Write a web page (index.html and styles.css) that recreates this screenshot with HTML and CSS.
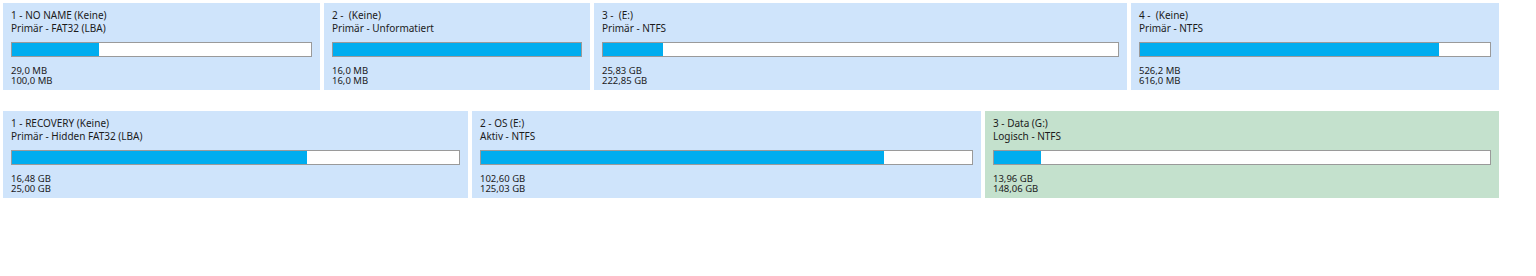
FILE: index.html
```html
<!DOCTYPE html>
<html>
<head>
    <title>Datenträger</title>
    <link rel="stylesheet" href="styles.css">
</head>
<body>

<div class="disk disk1">
    <div class="part">
        <div class="name">1 - NO NAME (Keine)</div>
        <div class="type">Primär - FAT32 (LBA)</div>
        <div class="bar"><div class="fill" style="width: 29%"></div></div>
        <div class="size">29,0 MB<br>100,0 MB</div>
    </div>
    <div class="part">
        <div class="name">2 - &nbsp;(Keine)</div>
        <div class="type">Primär - Unformatiert</div>
        <div class="bar"><div class="fill" style="width: 100%"></div></div>
        <div class="size">16,0 MB<br>16,0 MB</div>
    </div>
    <div class="part">
        <div class="name">3 - &nbsp;(E:)</div>
        <div class="type">Primär - NTFS</div>
        <div class="bar"><div class="fill" style="width: 11.6%"></div></div>
        <div class="size">25,83 GB<br>222,85 GB</div>
    </div>
    <div class="part">
        <div class="name">4 - &nbsp;(Keine)</div>
        <div class="type">Primär - NTFS</div>
        <div class="bar"><div class="fill" style="width: 85.4%"></div></div>
        <div class="size">526,2 MB<br>616,0 MB</div>
    </div>
</div>

<div class="disk disk2">
    <div class="part">
        <div class="name">1 - RECOVERY (Keine)</div>
        <div class="type">Primär - Hidden FAT32 (LBA)</div>
        <div class="bar"><div class="fill" style="width: 65.9%"></div></div>
        <div class="size">16,48 GB<br>25,00 GB</div>
    </div>
    <div class="part">
        <div class="name">2 - OS (E:)</div>
        <div class="type">Aktiv - NTFS</div>
        <div class="bar"><div class="fill" style="width: 82%"></div></div>
        <div class="size">102,60 GB<br>125,03 GB</div>
    </div>
    <div class="part logical">
        <div class="name">3 - Data (G:)</div>
        <div class="type">Logisch - NTFS</div>
        <div class="bar"><div class="fill" style="width: 9.4%"></div></div>
        <div class="size">13,96 GB<br>148,06 GB</div>
    </div>
</div>

</body>
</html>
```

FILE: styles.css
```css
body {
    margin: 3px;
    background: #fff;
    font-family: "Noto Sans", "Open Sans", sans-serif;
    color: #1b1b1b;
}

.disk {
    display: grid;
    column-gap: 4px;
    width: 1496px;
}

.disk1 {
    grid-template-columns: 317px 266px 533px 368px;
    margin-bottom: 21px;
}

.disk2 {
    grid-template-columns: 465px 509px 514px;
}

.part {
    background: #cfe4fb;
    padding: 6px 8px 4px 8px;
    height: 77px;
}

.part.logical {
    background: #c4e1cd;
}

.name, .type {
    font-size: 10px;
    line-height: 13px;
    white-space: nowrap;
}

.bar {
    margin-top: 7px;
    height: 13px;
    border: 1px solid #9a9a9a;
    background: #fff;
}

.fill {
    height: 100%;
    background: #00adef;
}

.size {
    margin-top: 9px;
    font-size: 9.5px;
    line-height: 10px;
}
```
